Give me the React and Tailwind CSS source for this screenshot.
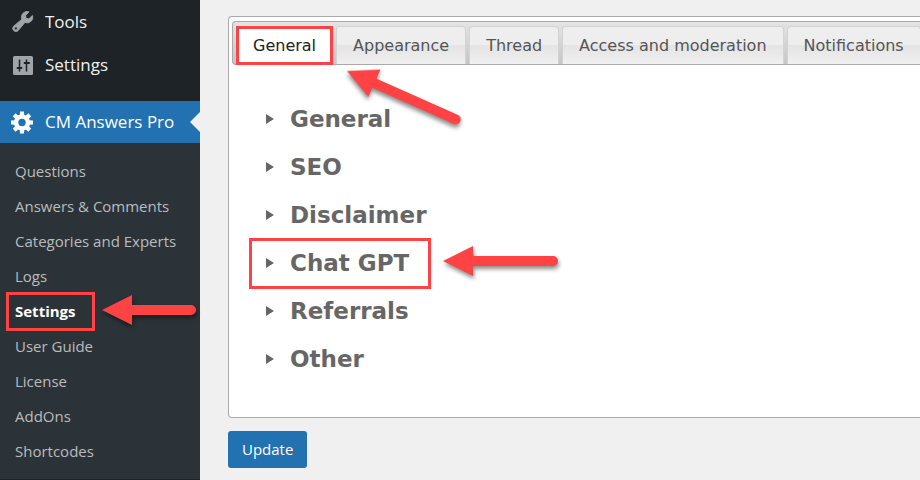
import { useState } from 'react';
import clsx from 'clsx';

const submenu = [
  'Questions',
  'Answers & Comments',
  'Categories and Experts',
  'Logs',
  'Settings',
  'User Guide',
  'License',
  'AddOns',
  'Shortcodes',
];

const tabs = ['General', 'Appearance', 'Thread', 'Access and moderation', 'Notifications'];

const sections = ['General', 'SEO', 'Disclaimer', 'Chat GPT', 'Referrals', 'Other'];

function ToolsIcon() {
  return (
    <svg viewBox="0 0 20 20" className="size-[25px] shrink-0 text-[#a0a5aa]" fill="currentColor" stroke="currentColor" strokeWidth="0.7" strokeLinejoin="round" aria-hidden="true">
      <path
        fillRule="evenodd"
        d="M16.9 9.77a4.543 4.543 0 0 1-4.95.99l-5.41 6.52c-.99.99-2.59.99-3.58 0s-.99-2.59 0-3.57l6.52-5.42c-.68-1.65-.35-3.61.99-4.95 1.28-1.28 3.12-1.62 4.72-1.06l-2.69 2.89.3 2.3 2.3.4 2.86-2.67c.53 1.58.18 3.39-1.06 4.57zM3.9 16.3c.45.44 1.17.44 1.61 0 .45-.45.45-1.17 0-1.61-.44-.45-1.16-.45-1.61 0a1.14 1.14 0 0 0 0 1.61z"
      />
    </svg>
  );
}

function SettingsIcon() {
  return (
    <svg viewBox="0 0 25 25" className="size-[25px] shrink-0" aria-hidden="true">
      <rect x="3" y="4" width="20" height="19" rx="1.5" fill="#a0a5aa" />
      <path d="M9.5 7.5V19.5M16.5 7.5V19.5" stroke="#1d2327" strokeWidth="1.5" />
      <path d="M6.8 16H12.2M13.8 11H19.8" stroke="#1d2327" strokeWidth="2" />
    </svg>
  );
}

function GearIcon() {
  return (
    <svg viewBox="0 0 25 25" className="size-[25px] shrink-0" fill="currentColor" aria-hidden="true">
      <circle cx="12" cy="12.5" r="5.9" fill="none" stroke="currentColor" strokeWidth="4.4" />
      {[0, 45, 90, 135, 180, 225, 270, 315].map((angle) => (
        <path key={angle} d="M9.7 6.5 10 1.5H14L14.3 6.5Z" transform={`rotate(${angle} 12 12.5)`} />
      ))}
    </svg>
  );
}

// Arrow pointing left, with the tip at 0,20 of its own box
function Arrow({ length, className }) {
  return (
    <svg
      width={length}
      height="40"
      className={clsx('pointer-events-none absolute z-10 overflow-visible drop-shadow-[1px_3px_2px_rgba(0,0,0,0.45)]', className)}
      aria-hidden="true"
    >
      <path
        d={`M0 20 L30 5 V15 H${length - 5} a5 5 0 0 1 0 10 H30 V35 Z`}
        fill="#ff4243"
      />
    </svg>
  );
}

function Highlight({ className }) {
  return <span className={clsx('pointer-events-none absolute border-3 border-[#ff4243]', className)} />;
}

function Sidebar() {
  return (
    <nav className="w-[200px] shrink-0 bg-[#1d2327] text-[17px] font-['Open_Sans',sans-serif]">
      <a href="#tools" className="flex h-[43px] items-center gap-2.5 pl-2.5 text-[#f0f0f1]">
        <ToolsIcon />
        Tools
      </a>
      <a href="#settings" className="flex h-[43px] items-center gap-2.5 pl-2.5 text-[#f0f0f1]">
        <SettingsIcon />
        Settings
      </a>

      <a href="#cm-answers" className="relative mt-[15px] flex h-[42px] items-center gap-2.5 bg-[#2271b1] pl-2.5 text-white">
        <GearIcon />
        CM Answers Pro
        <span className="absolute top-[11px] right-0 border-y-10 border-r-10 border-y-transparent border-r-[#f0f0f1]" />
      </a>

      <ul className="bg-[#2c3338] pt-[11px] pb-2.5 text-[15px]">
        {submenu.map((item) => (
          <li key={item} className="relative">
            <a
              href="#submenu"
              className={clsx('flex h-[35px] items-center pl-[15px]', item === 'Settings' ? 'font-bold text-white' : 'text-[#b9bcbe]')}
            >
              {item}
            </a>
            {item === 'Settings' && (
              <>
                <Highlight className="-top-0.5 left-1.5 h-[39px] w-[89px]" />
                <Arrow length={94} className="-top-1 left-[102px]" />
              </>
            )}
          </li>
        ))}
      </ul>
    </nav>
  );
}

function Tabs({ active, onChange }) {
  return (
    <div
      role="tablist"
      className="flex h-11 gap-[3px] rounded-l border border-r-0 border-[#aaaaaa] bg-linear-to-b from-[#e4e4e4] to-[#c6c6c6] pt-1 pl-[3px]"
    >
      {tabs.map((tab) => (
        <div key={tab} className="relative shrink-0">
          <button
            type="button"
            role="tab"
            aria-selected={tab === active}
            onClick={() => onChange(tab)}
            className={clsx(
              'h-full rounded-t border border-b-0 px-4 whitespace-nowrap',
              tab === active
                ? 'border-[#aaaaaa] bg-white text-[#212121]'
                : 'border-[#d3d3d3] bg-linear-to-b from-[#eeeeee] from-50% via-[#e4e4e4] via-50% to-[#f0f0f0] text-[#555555]'
            )}
          >
            {tab}
          </button>
          {tab === 'General' && (
            <>
              <Highlight className="inset-x-0 top-0 -bottom-px" />
              <Arrow length={124} className="top-[25px] left-[111px] origin-[0_20px] rotate-24" />
            </>
          )}
        </div>
      ))}
    </div>
  );
}

export default function App() {
  const [active, setActive] = useState('General');

  return (
    <div className="flex min-h-screen overflow-hidden bg-[#f0f0f1]">
      <Sidebar />

      <main className="min-w-0 flex-1 overflow-hidden pt-4 pl-7">
        <div className="rounded-l border border-r-0 border-[#aaaaaa] bg-white pt-1 pb-[34px] pl-[3px] text-base font-['DejaVu_Sans',sans-serif]">
          <Tabs active={active} onChange={setActive} />

          <div className="pt-[30px] pl-[34px] text-[#666666]">
            {sections.map((section) => (
              <div key={section} className="relative">
                <button type="button" className="flex h-12 items-center gap-4 text-[23px] font-bold">
                  <svg viewBox="0 0 8 10" className="h-2.5 w-2" fill="currentColor" aria-hidden="true">
                    <path d="M0 0 8 5 0 10Z" />
                  </svg>
                  {section}
                </button>
                {section === 'Chat GPT' && (
                  <>
                    <Highlight className="-top-px -left-[17px] h-[51px] w-[182px]" />
                    <Arrow length={115} className="top-0.5 left-[177px]" />
                  </>
                )}
              </div>
            ))}
          </div>
        </div>

        <button
          type="button"
          className="mt-[13px] h-[37px] rounded-[3px] bg-[#2271b1] px-3.5 text-[15px] text-white font-['Open_Sans',sans-serif]"
        >
          Update
        </button>
      </main>
    </div>
  );
}
